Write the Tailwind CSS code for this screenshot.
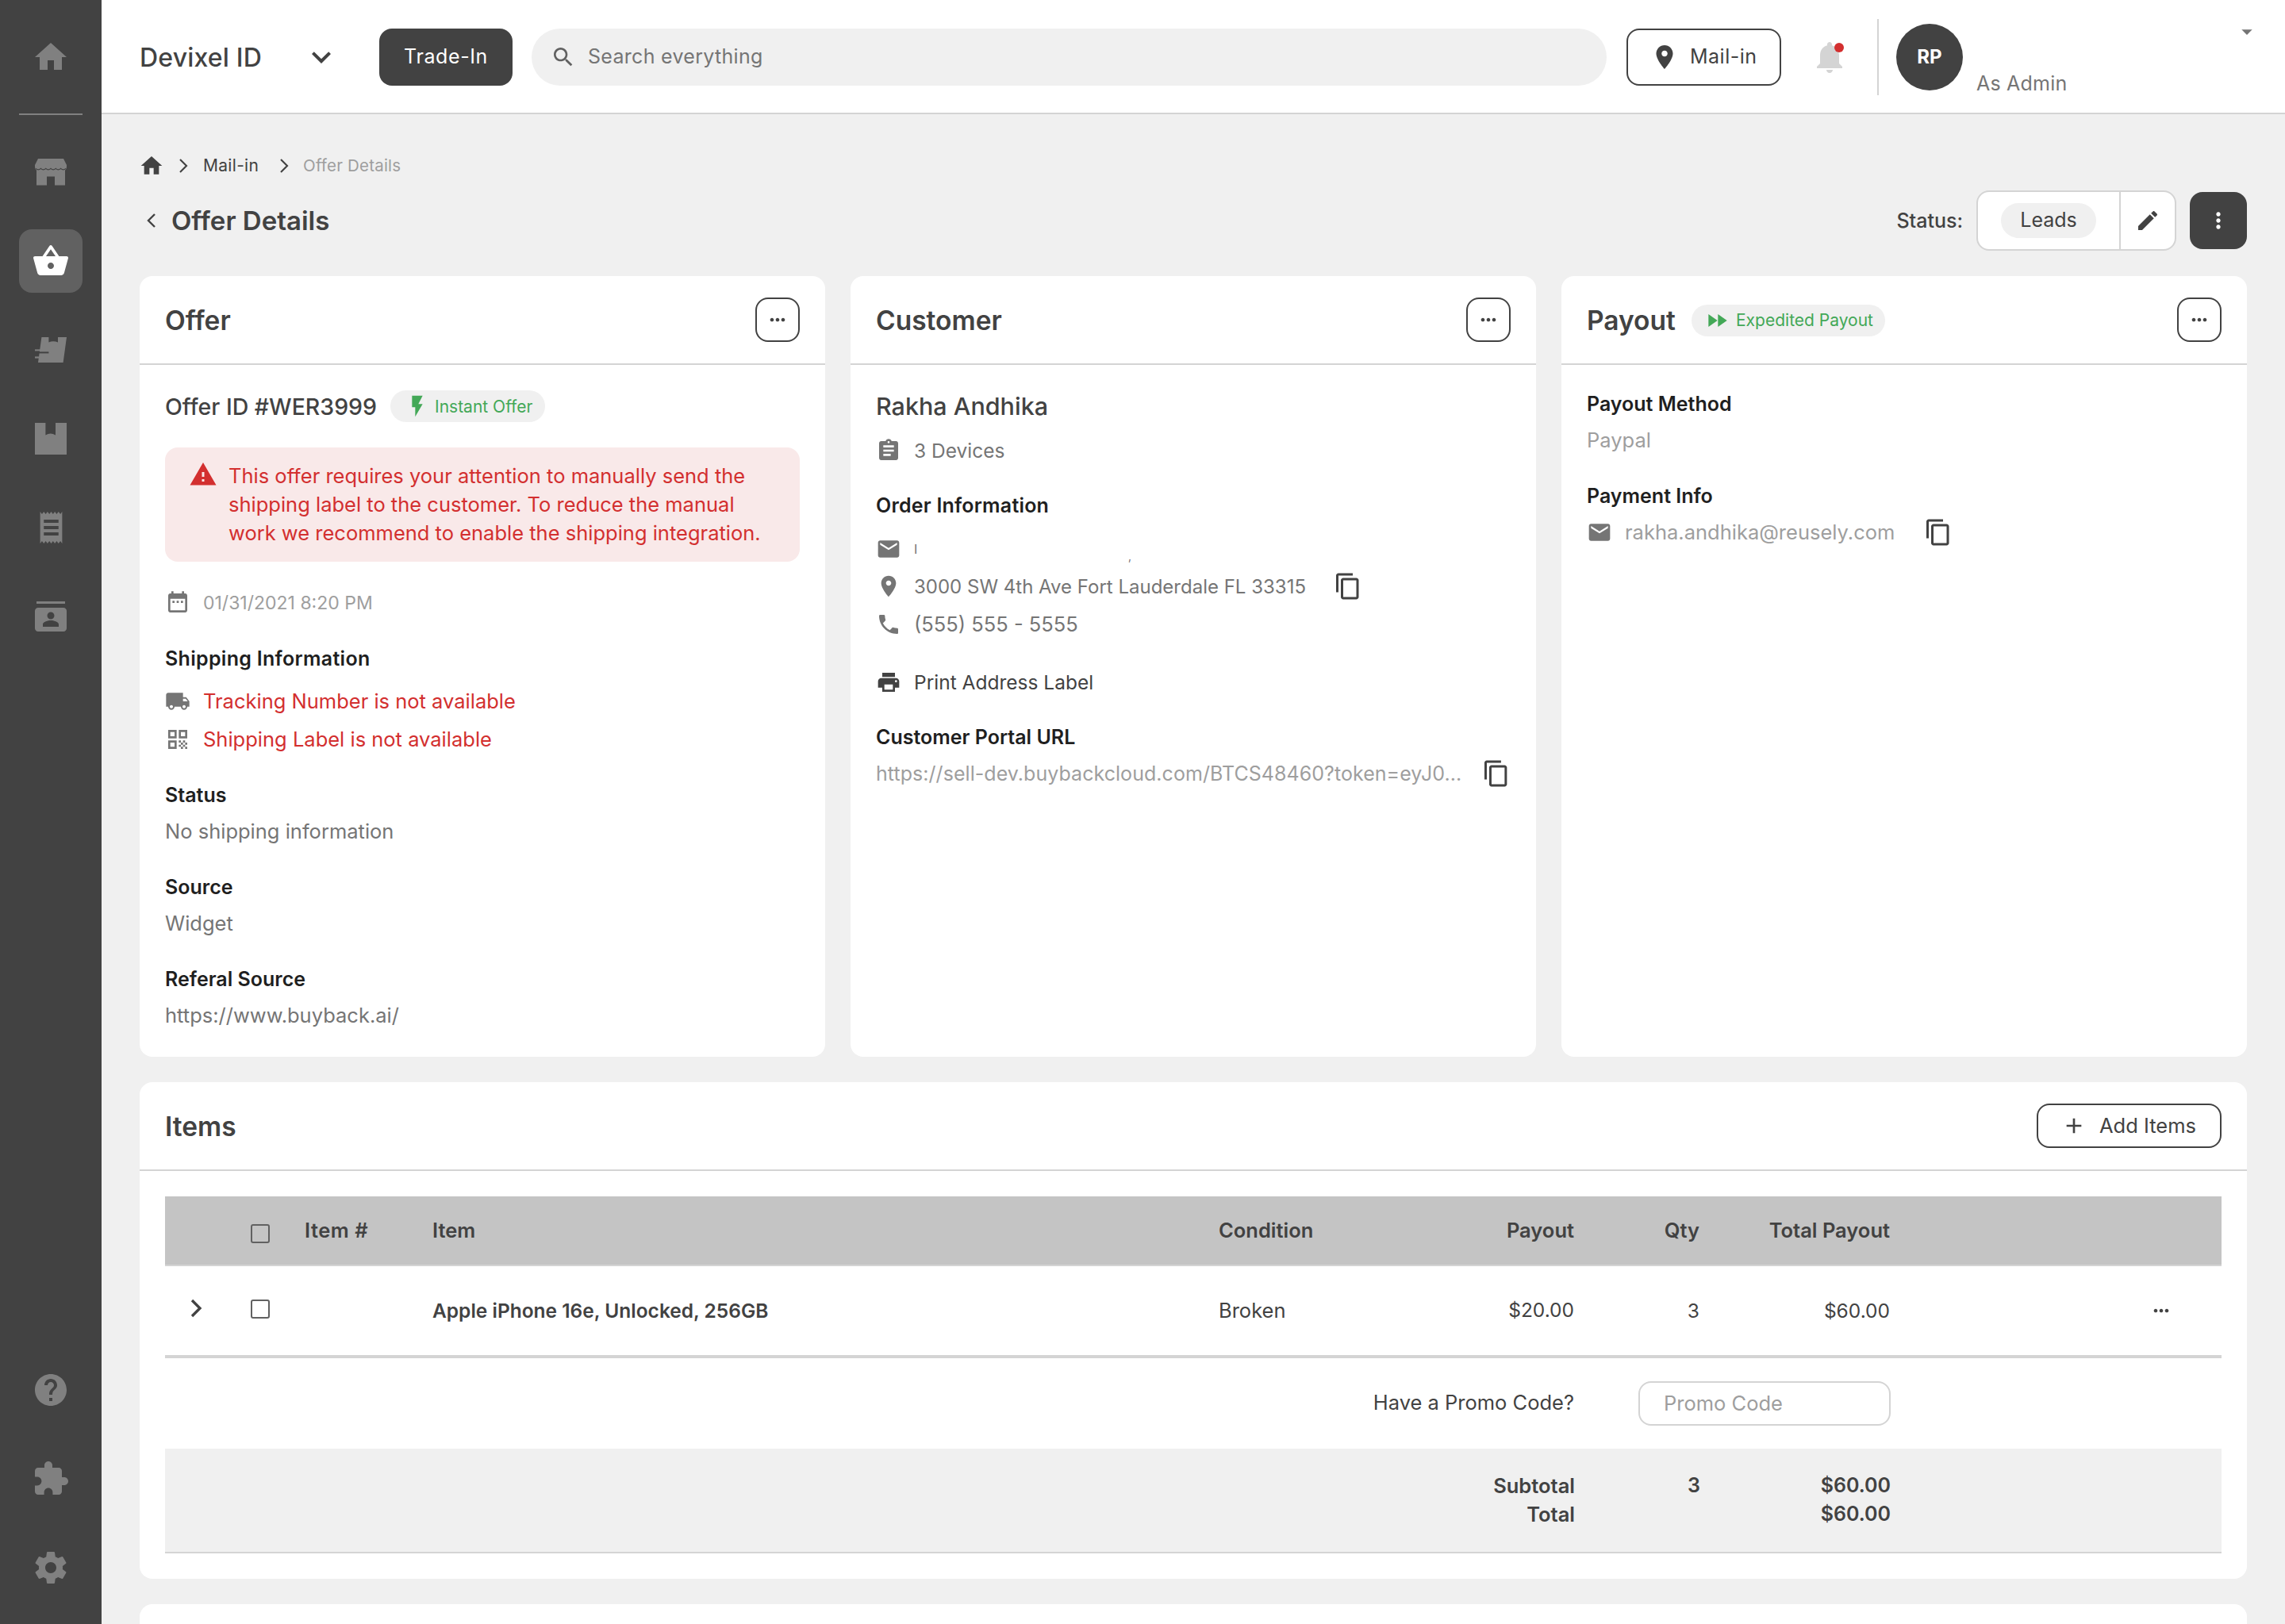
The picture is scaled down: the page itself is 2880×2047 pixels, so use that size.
<!DOCTYPE html>
<html lang="en">
<head>
    <meta charset="UTF-8">
    <title>Offer Details</title>
    <script src="https://cdn.jsdelivr.net/npm/@tailwindcss/browser@4"></script>
</head>
<body class="bg-[#f0f0f0] font-['Inter',sans-serif] text-[#424242]">
<div class="flex min-h-[2047px] h-[2047px] overflow-hidden">

    <!-- Sidebar -->
    <aside class="w-[128px] shrink-0 bg-[#424242] flex flex-col items-center text-[#808080] pt-[48px]">
        <svg class="w-[48px] h-[48px] fill-current" viewBox="0 0 24 24"><path d="M10 20v-6h4v6h5v-8h3L12 3 2 12h3v8z"/></svg>
        <div class="w-[80px] h-[2px] bg-[#808080] mt-[47px] mb-[46px]"></div>
        <svg class="w-[48px] h-[48px] fill-current" viewBox="0 0 24 24"><path d="M4 4.500h16l2 4v1c0 1.200-.6 2-1 2.200v9.600h-6.500v-5.500h-5v5.500H3v-9.600C2.600 11.500 2 10.700 2 9.500v-1z"/><path d="M2.500 10.700q1.600 1.500 3.200 0q1.600 1.500 3.200 0q1.500 1.500 3.100 0q1.600 1.500 3.100 0q1.600 1.500 3.200 0q1.600 1.500 3.200 0" fill="none" stroke="#424242" stroke-width=".6"/></svg>
        <div class="w-[80px] h-[80px] rounded-2xl bg-[#616161] flex items-center justify-center mt-[50px] text-white">
            <svg class="w-[48px] h-[48px] fill-current" viewBox="0 0 24 24"><path d="M17.210 9l-4.380-6.560c-.19-.28-.51-.42-.83-.42-.32 0-.64.14-.83.43L6.790 9H2c-.55 0-1 .45-1 1 0 .09.01.18.04.27l2.540 9.270c.23.84 1 1.460 1.920 1.460h13c.92 0 1.690-.62 1.930-1.460l2.540-9.270L23 10c0-.55-.45-1-1-1h-4.790zM9 9l3-4.400L15 9H9zm3 8c-1.100 0-2-.9-2-2s.9-2 2-2 2 .9 2 2-.9 2-2 2z"/></svg>
        </div>
        <svg class="w-[48px] h-[48px] fill-current mt-[48px]" viewBox="0 0 24 24"><path d="M6.200 4h4.500v3.300q2.900-1.400 5.800 0V4H22l-2.200 16H4z"/><rect x="2" y="11.700" width="8" height="1"/><rect x="3" y="13.200" width="7.700" height="1" fill="#424242"/><rect x="2" y="16.200" width="6.700" height="1.100"/></svg>
        <svg class="w-[48px] h-[48px] fill-current mt-[62px]" viewBox="0 0 24 24"><path d="M2 3h6.700v7.700q3.150-2 6.300 0V3H22v20H2z"/></svg>
        <svg class="w-[37px] h-[48px] fill-current mt-[66px]" viewBox="0 0 24 24" preserveAspectRatio="none"><path d="M18 17H6v-2h12v2zm0-4H6v-2h12v2zm0-4H6V7h12v2zM3 22l1.500-1.500L6 22l1.500-1.500L9 22l1.500-1.500L12 22l1.500-1.500L15 22l1.500-1.500L18 22l1.500-1.500L21 22V2l-1.500 1.500L18 2l-1.500 1.500L15 2l-1.500 1.500L12 2l-1.500 1.500L9 2 7.500 3.500 6 2 4.500 3.500 3 2v20z"/></svg>
        <svg class="w-[48px] h-[48px] fill-current mt-[65px]" viewBox="0 0 24 24"><path d="M21 2H3v1.500h18zM20 6H4c-1.100 0-2 .9-2 2v11c0 1.100.9 2 2 2h16c1.100 0 2-.9 2-2V8c0-1.100-.9-2-2-2zm-8 2.750c1.240 0 2.250 1.010 2.250 2.250s-1.010 2.250-2.250 2.250S9.750 12.240 9.750 11 10.760 8.750 12 8.750zM17 18H7v-1.500c0-1.670 3.330-2.500 5-2.500s5 .83 5 2.500V18z"/></svg>

        <div class="mt-auto flex flex-col items-center gap-[64px] pb-[47px]">
            <svg class="w-[48px] h-[48px] fill-current" viewBox="0 0 24 24"><path d="M12 2C6.480 2 2 6.480 2 12s4.480 10 10 10 10-4.480 10-10S17.520 2 12 2zm1 17h-2v-2h2v2zm2.070-7.750l-.9.92C13.450 12.900 13 13.500 13 15h-2v-.5c0-1.100.45-2.100 1.170-2.830l1.240-1.260c.37-.36.59-.86.59-1.410 0-1.100-.9-2-2-2s-2 .9-2 2H8c0-2.210 1.790-4 4-4s4 1.790 4 4c0 .88-.36 1.680-.93 2.250z"/></svg>
            <svg class="w-[48px] h-[48px] fill-current" viewBox="0 0 24 24"><path d="M20.500 11H19V7c0-1.100-.9-2-2-2h-4V3.500C13 2.120 11.880 1 10.500 1S8 2.120 8 3.500V5H4c-1.100 0-1.990.9-1.990 2v3.800H3.500c1.490 0 2.700 1.210 2.700 2.700s-1.210 2.700-2.700 2.700H2V20c0 1.100.9 2 2 2h3.800v-1.500c0-1.490 1.210-2.700 2.700-2.700 1.490 0 2.700 1.210 2.700 2.700V22H17c1.100 0 2-.9 2-2v-4h1.500c1.380 0 2.500-1.120 2.500-2.500S21.880 11 20.500 11z"/></svg>
            <svg class="w-[48px] h-[48px] fill-current" viewBox="0 0 24 24"><path d="M19.430 12.980c.04-.32.07-.64.07-.98s-.03-.66-.07-.98l2.110-1.650c.19-.15.24-.42.12-.64l-2-3.460c-.12-.22-.39-.3-.61-.22l-2.490 1c-.52-.4-1.080-.73-1.690-.98l-.38-2.650C14.460 2.180 14.250 2 14 2h-4c-.25 0-.46.18-.49.42l-.38 2.650c-.61.25-1.170.59-1.690.98l-2.490-1c-.23-.09-.49 0-.61.22l-2 3.460c-.13.22-.07.49.12.64l2.110 1.650c-.04.32-.07.65-.07.98s.03.66.07.98l-2.110 1.650c-.19.15-.24.42-.12.64l2 3.460c.12.22.39.3.61.22l2.490-1c.52.4 1.080.73 1.690.98l.38 2.650c.03.24.24.42.49.42h4c.25 0 .46-.18.49-.42l.38-2.650c.61-.25 1.170-.59 1.690-.98l2.490 1c.23.09.49 0 .61-.22l2-3.460c.12-.22.07-.49-.12-.64l-2.110-1.650zM12 15.500c-1.930 0-3.500-1.570-3.500-3.500s1.570-3.500 3.500-3.500 3.500 1.570 3.500 3.500-1.570 3.500-3.500 3.500z"/></svg>
        </div>
    </aside>

    <div class="flex-1 min-w-0 flex flex-col">
        <!-- Top bar -->
        <header class="h-[144px] shrink-0 bg-white border-b-2 border-[#d4d4d4] flex items-center pt-[2px] pl-[48px] pr-[48px]">
            <span class="w-[205px] mt-[2px] text-[32px] font-medium text-[#424242] tracking-[0.2px]">Devixel ID</span>
            <svg class="w-[48px] h-[48px] fill-[#424242] mr-[49px]" viewBox="0 0 24 24"><path d="M16.590 8.590L12 13.170 7.410 8.590 6 10l6 6 6-6z"/></svg>
            <button class="w-[168px] h-[72px] rounded-2xl bg-[#424242] text-white text-[25px] tracking-[0.6px]">Trade-In</button>
            <div class="ml-[24px] w-[1355px] h-[72px] rounded-[36px] bg-[#f0f0f0] flex items-center pl-[24px]">
                <svg class="w-[32px] h-[32px] fill-[#616161]" viewBox="0 0 24 24"><path d="M15.500 14h-.79l-.28-.27C15.410 12.590 16 11.110 16 9.500 16 5.910 13.090 3 9.500 3S3 5.910 3 9.500 5.910 16 9.500 16c1.610 0 3.090-.59 4.230-1.570l.27.28v.79l5 4.990L20.490 19l-4.990-5zm-6 0C7.010 14 5 11.990 5 9.500S7.010 5 9.500 5 14 7.010 14 9.500 11.990 14 9.500 14z"/></svg>
                <span class="ml-[15px] text-[25px] text-[#757575] tracking-[0.3px]">Search everything</span>
            </div>
            <button class="ml-[25px] w-[195px] h-[72px] rounded-2xl border-2 border-[#424242] flex items-center pl-[28px]">
                <svg class="w-[36px] h-[36px] fill-[#424242]" viewBox="0 0 24 24"><path d="M12 2C8.130 2 5 5.130 5 9c0 5.250 7 13 7 13s7-7.750 7-13c0-3.870-3.130-7-7-7zm0 9.500c-1.380 0-2.500-1.120-2.500-2.500s1.120-2.500 2.500-2.500 2.500 1.120 2.500 2.500-1.120 2.500-2.500 2.500z"/></svg>
                <span class="ml-[14px] text-[25px] tracking-[0.5px]">Mail-in</span>
            </button>
            <div class="relative ml-[37px] w-[48px] h-[48px]">
                <svg class="w-[48px] h-[48px] fill-[#d4d4d4]" viewBox="0 0 24 24"><path d="M12 22c1.100 0 2-.9 2-2h-4c0 1.100.89 2 2 2zm6-6v-5c0-3.070-1.640-5.640-4.500-6.320V4c0-.83-.67-1.500-1.500-1.500s-1.500.67-1.500 1.500v.68C7.630 5.360 6 7.920 6 11v5l-2 2v1h16v-1l-2-2z"/></svg>
                <span class="absolute right-[6px] top-[6px] w-[12px] h-[12px] rounded-full bg-[#d32f2f]"></span>
            </div>
            <div class="w-[2px] h-[96px] bg-[#d4d4d4] ml-[36px]"></div>
            <div class="ml-[22px] w-[84px] h-[84px] rounded-full bg-[#424242] text-white flex items-center justify-center text-[24px] font-bold">RP</div>
            <div class="relative flex-1 h-[84px]">
                <span class="absolute left-[17px] top-[60px] text-[25px] leading-[30px] text-[#757575] tracking-[0.2px]">As Admin</span>
                <svg class="absolute right-[-16px] top-[-6px] w-[32px] h-[32px] fill-[#757575]" viewBox="0 0 24 24"><path d="M7 10l5 5 5-5z"/></svg>
            </div>
        </header>

        <main class="px-[48px] flex flex-col">
            <!-- Breadcrumb -->
            <nav class="flex items-center h-[30px] mt-[50px] text-[21px]">
                <svg class="w-[32px] h-[32px] fill-[#424242] -ml-[1px]" viewBox="0 0 24 24"><path d="M10 20v-6h4v6h5v-8h3L12 3 2 12h3v8z"/></svg>
                <svg class="w-[32px] h-[32px] fill-none stroke-[#424242] stroke-[1.6] ml-[8px]" viewBox="0 0 24 24"><path d="M9 6l6 6-6 6"/></svg>
                <span class="ml-[9px] w-[86px] tracking-[0.3px]">Mail-in</span>
                <svg class="w-[32px] h-[32px] fill-none stroke-[#424242] stroke-[1.6]" viewBox="0 0 24 24"><path d="M9 6l6 6-6 6"/></svg>
                <span class="ml-[8px] text-[20.500px] text-[#9e9e9e] tracking-[0.2px]">Offer Details</span>
            </nav>

            <!-- Title row -->
            <div class="flex items-center h-[76px] mt-[16px]">
                <svg class="w-[32px] h-[32px] fill-none stroke-[#424242] stroke-[1.8] -ml-[1px]" viewBox="0 0 24 24"><path d="M15 6l-6 6 6 6"/></svg>
                <h1 class="ml-[9px] mt-[2px] text-[33px] font-semibold">Offer Details</h1>
                <span class="ml-auto mt-[1px] text-[25px] font-medium">Status:</span>
                <div class="ml-[17px] w-[252px] h-[76px] rounded-2xl border-2 border-[#d4d4d4] bg-white flex items-center">
                    <div class="w-[180px] flex justify-center border-r-2 border-[#d4d4d4] h-full items-center">
                        <span class="w-[120px] h-[44px] rounded-full bg-[#f0f0f0] flex items-center justify-center text-[25px]">Leads</span>
                    </div>
                    <div class="flex-1 flex justify-center">
                        <svg class="w-[32px] h-[32px] fill-[#424242]" viewBox="0 0 24 24"><path d="M3 17.250V21h3.750L17.810 9.940l-3.750-3.750L3 17.250zM20.710 7.040c.39-.39.39-1.020 0-1.410l-2.340-2.340c-.39-.39-1.020-.39-1.410 0l-1.830 1.830 3.750 3.750 1.830-1.830z"/></svg>
                    </div>
                </div>
                <button class="ml-[17px] w-[72px] h-[72px] rounded-2xl bg-[#424242] flex items-center justify-center">
                    <svg class="w-[32px] h-[32px] fill-white" viewBox="0 0 24 24"><path d="M12 8c1.100 0 2-.9 2-2s-.9-2-2-2-2 .9-2 2 .9 2 2 2zm0 2c-1.100 0-2 .9-2 2s.9 2 2 2 2-.9 2-2-.9-2-2-2zm0 6c-1.100 0-2 .9-2 2s.9 2 2 2 2-.9 2-2-.9-2-2-2z"/></svg>
                </button>
            </div>

            <!-- Cards -->
            <div class="grid grid-cols-3 gap-[32px] mt-[32px]">
                <!-- Offer -->
                <section class="h-[984px] bg-white rounded-2xl">
                    <div class="h-[112px] border-b-2 border-[#d4d4d4] flex items-center justify-between px-[32px]">
                        <h2 class="mt-[2px] text-[33.500px] font-semibold">Offer</h2>
                        <button class="w-[56px] h-[56px] rounded-2xl border-2 border-[#424242] flex items-center justify-center">
                            <svg class="w-[28px] h-[28px] fill-[#424242]" viewBox="0 0 24 24"><path d="M6 10c-1.100 0-2 .9-2 2s.9 2 2 2 2-.9 2-2-.9-2-2-2zm12 0c-1.100 0-2 .9-2 2s.9 2 2 2 2-.9 2-2-.9-2-2-2zm-6 0c-1.100 0-2 .9-2 2s.9 2 2 2 2-.9 2-2-.9-2-2-2z"/></svg>
                        </button>
                    </div>
                    <div class="px-[32px]">
                        <div class="flex items-center mt-[32px] h-[40px]">
                            <span class="w-[284px] mt-[2px] text-[28.500px] font-medium whitespace-nowrap">Offer ID #WER3999</span>
                            <span class="w-[195px] h-[40px] rounded-full bg-[#f0f0f0] flex items-center pl-[22px]">
                                <svg class="w-[32px] h-[32px] fill-[#43a857] -ml-[4px]" viewBox="0 0 24 24"><path d="M7 2v11h3v9l7-12h-4l4-8z"/></svg>
                                <span class="ml-[6px] mt-[2px] text-[21px] text-[#43a857]">Instant Offer</span>
                            </span>
                        </div>
                        <div class="mt-[32px] h-[144px] rounded-2xl bg-[#f9e9e9] flex pl-[30px] pt-[18px]">
                            <svg class="w-[36px] h-[36px] fill-[#d32f2f] shrink-0 -mt-[2px]" viewBox="0 0 24 24"><path d="M1 21h22L12 2 1 21zm12-3h-2v-2h2v2zm0-4h-2v-4h2v4z"/></svg>
                            <p class="ml-[14px] text-[25.500px] leading-[36px] text-[#d32f2f] whitespace-nowrap">This offer requires your attention to manually send the<br>shipping label to the customer. To reduce the manual<br>work we recommend to enable the shipping integration.</p>
                        </div>
                        <div class="flex items-center mt-[36px] h-[32px]">
                            <svg class="w-[32px] h-[32px] fill-[#757575]" viewBox="0 0 24 24"><path d="M19 3h-1V1h-2v2H8V1H6v2H5c-1.110 0-1.990.9-1.990 2L3 19c0 1.100.89 2 2 2h14c1.100 0 2-.9 2-2V5c0-1.100-.9-2-2-2zm0 16H5V8h14v11zM7 10h2v2H7zm4 0h2v2h-2zm4 0h2v2h-2z"/></svg>
                            <span class="ml-[16px] text-[23px] text-[#9e9e9e]">01/31/2021 8:20 PM</span>
                        </div>
                        <h3 class="mt-[38px] text-[25px] leading-[32px] font-semibold text-[#1f1f1f] tracking-[0.3px]">Shipping Information</h3>
                        <div class="flex items-center mt-[22px] h-[32px] text-[25.500px] text-[#d32f2f]">
                            <svg class="w-[32px] h-[32px] fill-[#757575]" viewBox="0 0 24 24"><path d="M20 8h-3V4H3c-1.100 0-2 .9-2 2v11h2c0 1.660 1.340 3 3 3s3-1.340 3-3h6c0 1.660 1.340 3 3 3s3-1.340 3-3h2v-5l-3-4zM6 18.500c-.83 0-1.500-.67-1.500-1.500s.67-1.500 1.500-1.500 1.500.67 1.500 1.500-.67 1.500-1.500 1.500zm13.500-9l1.960 2.500H17V9.500h2.500zm-1.500 9c-.83 0-1.500-.67-1.500-1.500s.67-1.500 1.500-1.500 1.500.67 1.500 1.500-.67 1.500-1.500 1.500z"/></svg>
                            <span class="ml-[16px]">Tracking Number is not available</span>
                        </div>
                        <div class="flex items-center mt-[16px] h-[32px] text-[25.500px] text-[#d32f2f]">
                            <svg class="w-[32px] h-[32px] fill-[#757575]" viewBox="0 0 24 24"><path d="M3 11h8V3H3v8zm2-6h4v4H5V5zM3 21h8v-8H3v8zm2-6h4v4H5v-4zM13 3v8h8V3h-8zm6 6h-4V5h4v4zM19 19h2v2h-2zM13 13h2v2h-2zM15 15h2v2h-2zM13 17h2v2h-2zM15 19h2v2h-2zM17 17h2v2h-2zM17 13h2v2h-2zM19 15h2v2h-2z"/></svg>
                            <span class="ml-[16px]">Shipping Label is not available</span>
                        </div>
                        <h3 class="mt-[38px] text-[25px] leading-[32px] font-semibold text-[#1f1f1f]">Status</h3>
                        <p class="mt-[14px] text-[25.500px] leading-[32px] text-[#757575]">No shipping information</p>
                        <h3 class="mt-[38px] text-[25px] leading-[32px] font-semibold text-[#1f1f1f]">Source</h3>
                        <p class="mt-[14px] text-[25.500px] leading-[32px] text-[#757575]">Widget</p>
                        <h3 class="mt-[38px] text-[25px] leading-[32px] font-semibold text-[#1f1f1f]">Referal Source</h3>
                        <p class="mt-[14px] text-[25.500px] leading-[32px] text-[#757575]">https://www.buyback.ai/</p>
                    </div>
                </section>

                <!-- Customer -->
                <section class="h-[984px] bg-white rounded-2xl">
                    <div class="h-[112px] border-b-2 border-[#d4d4d4] flex items-center justify-between px-[32px]">
                        <h2 class="mt-[2px] text-[33.500px] font-semibold">Customer</h2>
                        <button class="w-[56px] h-[56px] rounded-2xl border-2 border-[#424242] flex items-center justify-center">
                            <svg class="w-[28px] h-[28px] fill-[#424242]" viewBox="0 0 24 24"><path d="M6 10c-1.100 0-2 .9-2 2s.9 2 2 2 2-.9 2-2-.9-2-2-2zm12 0c-1.100 0-2 .9-2 2s.9 2 2 2 2-.9 2-2-.9-2-2-2zm-6 0c-1.100 0-2 .9-2 2s.9 2 2 2 2-.9 2-2-.9-2-2-2z"/></svg>
                        </button>
                    </div>
                    <div class="px-[32px]">
                        <p class="mt-[32px] text-[30.500px] leading-[40px] font-medium">Rakha Andhika</p>
                        <div class="flex items-center mt-[20px] h-[32px]">
                            <svg class="w-[32px] h-[32px] fill-[#757575]" viewBox="0 0 24 24"><path d="M19 3h-4.180C14.400 1.840 13.300 1 12 1c-1.300 0-2.400.84-2.820 2H5c-1.100 0-2 .9-2 2v14c0 1.100.9 2 2 2h14c1.100 0 2-.9 2-2V5c0-1.100-.9-2-2-2zm-7 0c.55 0 1 .45 1 1s-.45 1-1 1-1-.45-1-1 .45-1 1-1zm2 14H7v-2h7v2zm3-4H7v-2h10v2zm0-4H7V7h10v2z"/></svg>
                            <span class="ml-[16px] text-[24.500px] text-[#757575]">3 Devices</span>
                        </div>
                        <h3 class="mt-[37px] text-[25px] leading-[32px] font-semibold text-[#1f1f1f] tracking-[0.2px]">Order Information</h3>
                        <div class="flex items-center mt-[23px] h-[32px]">
                            <svg class="w-[32px] h-[32px] fill-[#757575]" viewBox="0 0 24 24"><path d="M20 4H4c-1.100 0-1.990.9-1.990 2L2 18c0 1.100.9 2 2 2h16c1.100 0 2-.9 2-2V6c0-1.100-.9-2-2-2zm0 4l-8 5-8-5V6l8 5 8-5v2z"/></svg>
                            <span class="ml-[16px] w-[270px] text-[16px] text-[#757575]">I</span>
                            <span class="mt-[16px] text-[14px] text-[#757575]">,</span>
                        </div>
                        <div class="flex items-center mt-[15px] h-[32px]">
                            <svg class="w-[32px] h-[32px] fill-[#757575]" viewBox="0 0 24 24"><path d="M12 2C8.130 2 5 5.130 5 9c0 5.250 7 13 7 13s7-7.750 7-13c0-3.870-3.130-7-7-7zm0 9.500c-1.380 0-2.500-1.120-2.500-2.500s1.120-2.500 2.500-2.500 2.500 1.120 2.500 2.500-1.120 2.500-2.500 2.500z"/></svg>
                            <span class="ml-[16px] w-[529px] mt-[1px] text-[24px] text-[#757575] whitespace-nowrap">3000 SW 4th Ave Fort Lauderdale FL 33315</span>
                            <svg class="w-[36px] h-[36px] fill-[#424242]" viewBox="0 0 24 24"><path d="M16 1H4c-1.100 0-2 .9-2 2v14h2V3h12V1zm3 4H8c-1.100 0-2 .9-2 2v14c0 1.100.9 2 2 2h11c1.100 0 2-.9 2-2V7c0-1.100-.9-2-2-2zm0 16H8V7h11v14z"/></svg>
                        </div>
                        <div class="flex items-center mt-[16px] h-[32px]">
                            <svg class="w-[32px] h-[32px] fill-[#757575]" viewBox="0 0 24 24"><path d="M6.620 10.790c1.440 2.830 3.760 5.140 6.590 6.590l2.200-2.200c.27-.27.67-.36 1.020-.24 1.120.37 2.330.57 3.570.57.55 0 1 .45 1 1V20c0 .55-.45 1-1 1-9.390 0-17-7.610-17-17 0-.55.45-1 1-1h3.500c.55 0 1 .45 1 1 0 1.250.2 2.450.57 3.570.11.35.03.74-.25 1.020l-2.200 2.200z"/></svg>
                            <span class="ml-[16px] text-[25.500px] text-[#757575]">(555) 555 - 5555</span>
                        </div>
                        <div class="flex items-center mt-[41px] h-[32px]">
                            <svg class="w-[32px] h-[32px] fill-[#424242]" viewBox="0 0 24 24"><path d="M19 8H5c-1.660 0-3 1.340-3 3v6h4v4h12v-4h4v-6c0-1.660-1.340-3-3-3zm-3 11H8v-5h8v5zm3-7c-.55 0-1-.45-1-1s.45-1 1-1 1 .45 1 1-.45 1-1 1zm-1-9H6v4h12V3z"/></svg>
                            <span class="ml-[16px] text-[24.500px]">Print Address Label</span>
                        </div>
                        <h3 class="mt-[37px] text-[25px] leading-[32px] font-semibold text-[#1f1f1f]">Customer Portal URL</h3>
                        <div class="flex items-center mt-[14px] h-[32px]">
                            <span class="w-[768px] mt-[2px] text-[25px] text-[#9e9e9e] whitespace-nowrap tracking-[0.05px]">https://sell-dev.buybackcloud.com/BTCS48460?token=eyJ0...</span>
                            <svg class="w-[36px] h-[36px] fill-[#424242]" viewBox="0 0 24 24"><path d="M16 1H4c-1.100 0-2 .9-2 2v14h2V3h12V1zm3 4H8c-1.100 0-2 .9-2 2v14c0 1.100.9 2 2 2h11c1.100 0 2-.9 2-2V7c0-1.100-.9-2-2-2zm0 16H8V7h11v14z"/></svg>
                        </div>
                    </div>
                </section>

                <!-- Payout -->
                <section class="h-[984px] bg-white rounded-2xl">
                    <div class="h-[112px] border-b-2 border-[#d4d4d4] flex items-center px-[32px]">
                        <h2 class="w-[132px] mt-[2px] text-[33.500px] font-semibold">Payout</h2>
                        <span class="w-[244px] h-[40px] mt-[2px] rounded-full bg-[#f0f0f0] flex items-center pl-[16px]">
                            <svg class="w-[32px] h-[32px] fill-[#43a857]" viewBox="0 0 24 24"><path d="M4 18l8.500-6L4 6v12zm9-12v12l8.500-6L13 6z"/></svg>
                            <span class="ml-[8px] text-[21px] text-[#43a857] whitespace-nowrap">Expedited Payout</span>
                        </span>
                        <button class="ml-auto w-[56px] h-[56px] rounded-2xl border-2 border-[#424242] flex items-center justify-center">
                            <svg class="w-[28px] h-[28px] fill-[#424242]" viewBox="0 0 24 24"><path d="M6 10c-1.100 0-2 .9-2 2s.9 2 2 2 2-.9 2-2-.9-2-2-2zm12 0c-1.100 0-2 .9-2 2s.9 2 2 2 2-.9 2-2-.9-2-2-2zm-6 0c-1.100 0-2 .9-2 2s.9 2 2 2 2-.9 2-2-.9-2-2-2z"/></svg>
                        </button>
                    </div>
                    <div class="px-[32px]">
                        <h3 class="mt-[33px] text-[25px] leading-[32px] font-semibold text-[#1f1f1f]">Payout Method</h3>
                        <p class="mt-[14px] text-[25.500px] leading-[32px] text-[#9e9e9e]">Paypal</p>
                        <h3 class="mt-[38px] text-[25px] leading-[32px] font-semibold text-[#1f1f1f]">Payment Info</h3>
                        <div class="flex items-center mt-[14px] h-[32px]">
                            <svg class="w-[32px] h-[32px] fill-[#757575]" viewBox="0 0 24 24"><path d="M20 4H4c-1.100 0-1.990.9-1.990 2L2 18c0 1.100.9 2 2 2h16c1.100 0 2-.9 2-2V6c0-1.100-.9-2-2-2zm0 4l-8 5-8-5V6l8 5 8-5v2z"/></svg>
                            <span class="ml-[16px] w-[377px] text-[25.500px] text-[#9e9e9e]">rakha.andhika@reusely.com</span>
                            <svg class="w-[36px] h-[36px] fill-[#424242]" viewBox="0 0 24 24"><path d="M16 1H4c-1.100 0-2 .9-2 2v14h2V3h12V1zm3 4H8c-1.100 0-2 .9-2 2v14c0 1.100.9 2 2 2h11c1.100 0 2-.9 2-2V7c0-1.100-.9-2-2-2zm0 16H8V7h11v14z"/></svg>
                        </div>
                    </div>
                </section>
            </div>

            <!-- Items -->
            <section class="mt-[32px] h-[626px] bg-white rounded-2xl">
                <div class="h-[112px] border-b-2 border-[#d4d4d4] flex items-center justify-between px-[32px]">
                    <h2 class="mt-[2px] text-[33.500px] font-semibold">Items</h2>
                    <button class="w-[233px] h-[56px] rounded-2xl border-2 border-[#424242] flex items-center pl-[29px]">
                        <svg class="w-[32px] h-[32px] fill-[#424242]" viewBox="0 0 24 24"><path d="M19 13h-6v6h-2v-6H5v-2h6V5h2v6h6v2z"/></svg>
                        <span class="ml-[16px] text-[25.500px]">Add Items</span>
                    </button>
                </div>
                <div class="px-[32px] pt-[32px]">
                    <div class="grid grid-cols-[108px_68px_161px_991px_448px_158px_240px_1fr] items-center h-[88px] bg-[#c4c4c4] border-b-2 border-[#d4d4d4] text-[25.500px] font-semibold">
                        <span></span>
                        <span class="w-[24px] h-[24px] rounded-[3px] border-2 border-[#616161] mt-[8px]"></span>
                        <span class="tracking-[0.5px]">Item #</span>
                        <span>Item</span>
                        <span class="flex justify-between"><span>Condition</span><span>Payout</span></span>
                        <span class="text-right">Qty</span>
                        <span class="text-right">Total Payout</span>
                        <span></span>
                    </div>
                    <div class="grid grid-cols-[108px_68px_161px_991px_448px_158px_240px_1fr] items-center h-[116px] border-b-4 border-[#d4d4d4] text-[24.500px]">
                        <svg class="w-[40px] h-[40px] fill-none stroke-[#424242] stroke-2 ml-[19px] -mt-[6px]" viewBox="0 0 24 24"><path d="M9 6l6 6-6 6"/></svg>
                        <span class="w-[24px] h-[24px] rounded-[3px] border-2 border-[#616161] -mt-[5px]"></span>
                        <span></span>
                        <span class="font-semibold">Apple iPhone 16e, Unlocked, 256GB</span>
                        <span class="flex justify-between"><span class="text-[25.500px]">Broken</span><span>$20.00</span></span>
                        <span class="text-right">3</span>
                        <span class="text-right">$60.00</span>
                        <svg class="w-[28px] h-[28px] fill-[#424242] justify-self-end mr-[62px]" viewBox="0 0 24 24"><path d="M6 10c-1.100 0-2 .9-2 2s.9 2 2 2 2-.9 2-2-.9-2-2-2zm12 0c-1.100 0-2 .9-2 2s.9 2 2 2 2-.9 2-2-.9-2-2-2zm-6 0c-1.100 0-2 .9-2 2s.9 2 2 2 2-.9 2-2-.9-2-2-2z"/></svg>
                    </div>
                    <div class="flex items-center h-[114px] pr-[417px]">
                        <span class="ml-auto -mt-[1px] text-[25.500px]">Have a Promo Code?</span>
                        <div class="ml-[81px] w-[318px] h-[56px] rounded-2xl border-2 border-[#d4d4d4] flex items-center pl-[30px] text-[25.500px] text-[#9e9e9e]">Promo Code</div>
                    </div>
                    <div class="h-[132px] bg-[#f0f0f0] border-b-2 border-[#d4d4d4] pt-[29px] pr-[417px] grid grid-cols-[1fr_158px_240px] auto-rows-[36px] items-center text-[25px] font-semibold text-right">
                        <span class="text-[25.500px]">Subtotal</span><span>3</span><span>$60.00</span>
                        <span class="text-[25.500px]">Total</span><span></span><span>$60.00</span>
                    </div>
                </div>
            </section>

            <!-- Next card, cut off by the window -->
            <section class="mt-[32px] h-[80px] bg-white rounded-2xl"></section>
        </main>
    </div>
</div>
</body>
</html>
